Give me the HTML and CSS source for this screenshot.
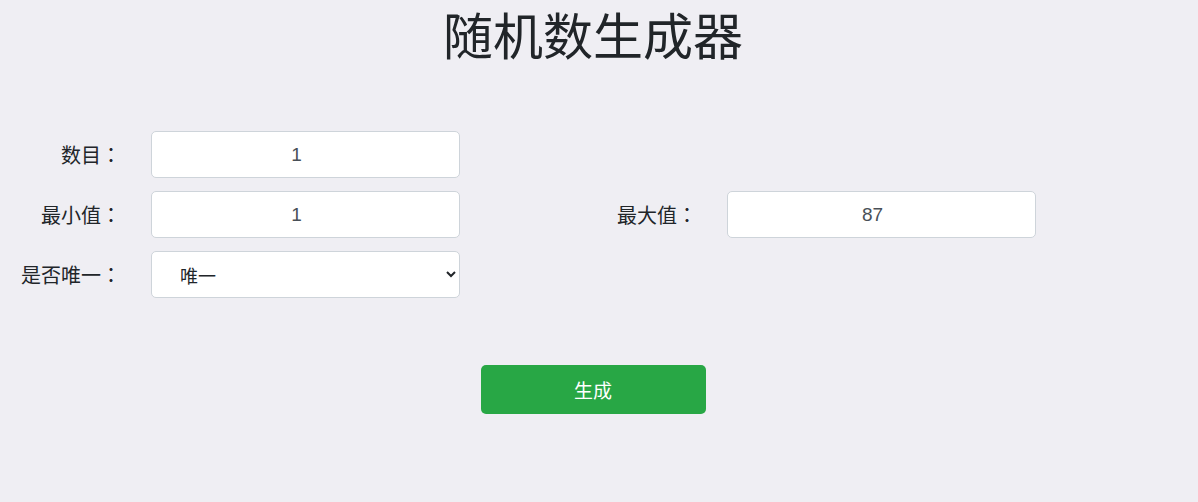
FILE: index.html
```html
<!DOCTYPE html>
<html lang="zh-CN">
  <head>
    <meta charset="UTF-8" />
    <meta name="viewport" content="width=device-width, initial-scale=1.0" />
    <title>随机数生成器</title>
    <link rel="stylesheet" href="styles.css">
  </head>
  <body>
    <div class="page">
      <h1>随机数生成器</h1>
      <form class="form">
        <label class="label" for="count">数目<span class="colon">：</span></label>
        <input class="field" id="count" type="number" value="1" />
        <span class="spacer"></span>
        <span class="label"></span>
        <span></span>

        <label class="label" for="min">最小值<span class="colon">：</span></label>
        <input class="field" id="min" type="number" value="1" />
        <span class="spacer"></span>
        <label class="label" for="max">最大值<span class="colon">：</span></label>
        <input class="field" id="max" type="number" value="87" />

        <label class="label" for="unique">是否唯一<span class="colon">：</span></label>
        <select class="field select" id="unique">
          <option>唯一</option>
          <option>不唯一</option>
        </select>
      </form>
      <div class="actions">
        <button type="button" class="btn">生成</button>
      </div>
    </div>
  </body>
</html>
```

FILE: styles.css
```css
body {
  margin: 0;
  padding: 0;
  background-color: #efeef3;
  color: #212529;
  font-family: "Microsoft YaHei", "Noto Sans CJK SC", "Liberation Sans", sans-serif;
}

.page {
  width: 1186px;
}

h1 {
  margin: 8px 0 0;
  font-size: 50px;
  font-weight: 400;
  line-height: 1;
  text-align: center;
}

.form {
  display: grid;
  grid-template-columns: 136px 338px 102px 136px 338px;
  grid-auto-rows: 47px;
  row-gap: 13px;
  margin-top: 73px;
}

.label {
  display: flex;
  align-items: center;
  justify-content: flex-end;
  padding-right: 15px;
  font-size: 20px;
}

.colon {
  font-family: "Noto Sans CJK JP", "Noto Sans CJK SC", sans-serif;
}

.field {
  box-sizing: border-box;
  width: 309px;
  height: 47px;
  margin-left: 15px;
  padding: 0 18px 0 0;
  border: 1px solid #ced4da;
  border-radius: 5px;
  background-color: #fff;
  color: #495057;
  font-family: "Liberation Sans", "Noto Sans CJK SC", sans-serif;
  font-size: 19px;
  text-align: center;
  -moz-appearance: textfield;
}

.field::-webkit-outer-spin-button,
.field::-webkit-inner-spin-button {
  -webkit-appearance: none;
  margin: 0;
}

.select {
  padding: 0 10px 0 24px;
  text-align: left;
  font-family: "Microsoft YaHei", "Noto Sans CJK SC", sans-serif;
  font-size: 18px;
  color: #212529;
}

.actions {
  display: flex;
  justify-content: center;
  margin-top: 67px;
}

.btn {
  width: 225px;
  height: 49px;
  border: none;
  border-radius: 5px;
  background-color: #28a745;
  color: #fff;
  font-family: "Microsoft YaHei", "Noto Sans CJK SC", sans-serif;
  font-size: 19px;
  cursor: pointer;
}

.btn:hover {
  background-color: #218838;
}
```
